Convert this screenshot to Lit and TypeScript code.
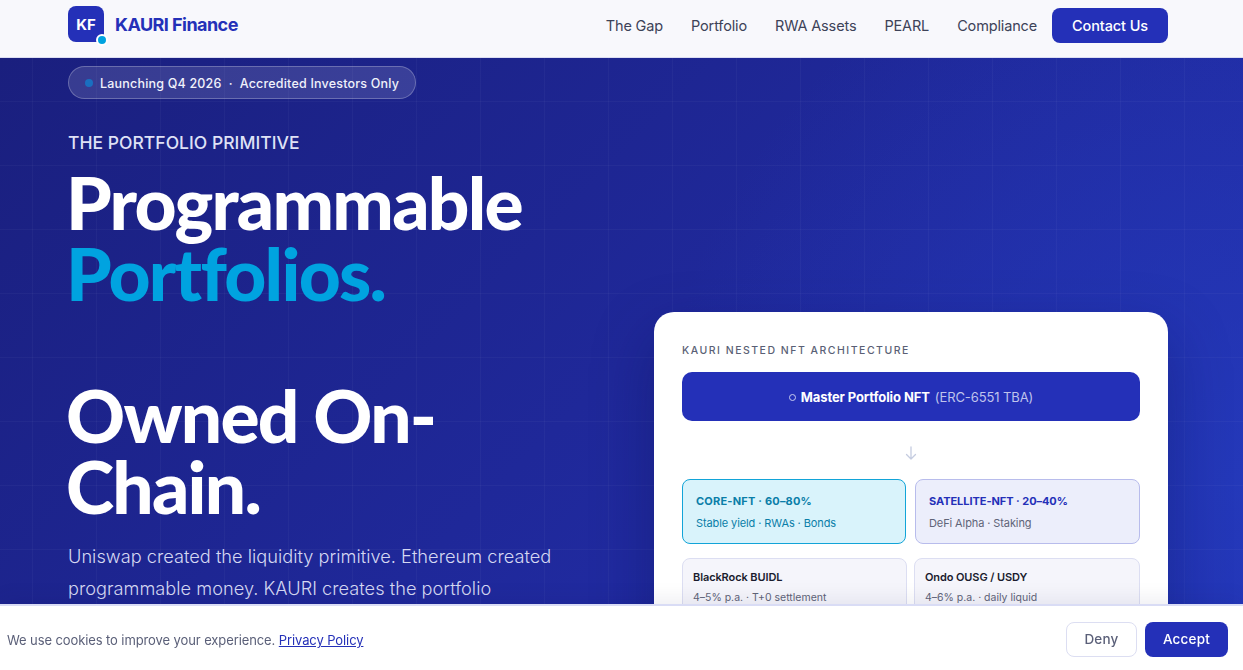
import { LitElement, html, css } from "lit";
import { customElement } from "lit/decorators.js";

const navLinks = ["The Gap", "Portfolio", "RWA Assets", "PEARL", "Compliance"];

@customElement("app-root")
export class AppRoot extends LitElement {
  static styles = css`
    :host {
      display: block;
      height: 100vh;
      overflow: hidden;
      font-family: Inter, "Noto Sans", sans-serif;
    }
    .nav {
      height: 51px;
      display: flex;
      align-items: center;
      justify-content: space-between;
      padding: 0 75px 6px 68px;
      background: #f8f8fc;
      border-bottom: 1px solid #dcdef2;
    }
    .brand {
      display: flex;
      align-items: center;
      gap: 11px;
      margin-top: -3px;
    }
    .logo {
      position: relative;
      width: 36px;
      height: 36px;
      border-radius: 8px;
      background: #2430b8;
      color: #fff;
      font-size: 15px;
      font-weight: 700;
      display: flex;
      align-items: center;
      justify-content: center;
    }
    .logo::after {
      content: "";
      position: absolute;
      right: -4px;
      bottom: -4px;
      width: 8px;
      height: 8px;
      border-radius: 50%;
      background: #00a3e0;
      border: 2px solid #fff;
    }
    .name {
      font-size: 18px;
      font-weight: 700;
      letter-spacing: -0.55px;
      color: #2430b8;
    }
    .links {
      display: flex;
      align-items: center;
      gap: 28px;
    }
    .links a {
      font-size: 14.5px;
      font-weight: 400;
      letter-spacing: -0.15px;
      color: #3d4258;
    }
    .contact {
      margin-left: -13px;
      width: 116px;
      height: 35px;
      border-radius: 8px;
      background: #2430b8;
      color: #fff;
      font-size: 14.5px;
      font-weight: 500;
      letter-spacing: -0.1px;
      display: flex;
      align-items: center;
      justify-content: center;
    }
    .hero {
      height: 612px;
      box-sizing: border-box;
      overflow: hidden;
      padding: 8px 75px 0 68px;
      display: grid;
      grid-template-columns: 514px 514px;
      justify-content: space-between;
      background:
        linear-gradient(rgba(255, 255, 255, 0.03) 1px, transparent 1px) 0 -21px / 64px 64px,
        linear-gradient(90deg, rgba(255, 255, 255, 0.03) 1px, transparent 1px) 32px 0 / 64px 64px,
        radial-gradient(circle at 100% 70%, rgba(36, 60, 190, 0.7), transparent 45%),
        linear-gradient(135deg, #1a1f7e 0%, #2431b4 100%);
    }
    .pill {
      display: inline-flex;
      align-items: center;
      gap: 7px;
      height: 33px;
      box-sizing: border-box;
      padding: 1px 16px 0;
      border-radius: 17px;
      border: 1px solid rgba(255, 255, 255, 0.25);
      background: rgba(255, 255, 255, 0.13);
      color: #f0f1fb;
      font-size: 12.5px;
      font-weight: 500;
      letter-spacing: 0.2px;
      white-space: pre;
    }
    .pill i {
      width: 8px;
      height: 8px;
      border-radius: 50%;
      background: #1a6fc0;
    }
    .eyebrow {
      margin-top: 33px;
      font-size: 17.5px;
      line-height: 22px;
      font-weight: 500;
      letter-spacing: 0.03px;
      color: #dfe1f6;
    }
    h1 {
      margin: 13px 0 0 -2px;
      width: 516px;
      font-family: Lato, Inter, sans-serif;
      font-size: 73px;
      line-height: 71px;
      font-weight: 900;
      letter-spacing: -1.75px;
      color: #fff;
    }
    h1 span {
      color: #00a3e0;
    }
    .lead {
      margin: 18px 0 0;
      width: 490px;
      font-size: 18.2px;
      line-height: 32px;
      font-weight: 300;
      letter-spacing: 0.02px;
      color: #d5d8f2;
    }
    .card {
      align-self: start;
      margin-top: 246px;
      padding: 28px;
      height: 500px;
      box-sizing: border-box;
      border-radius: 20px;
      background: #fff;
      box-shadow: 0 24px 60px rgba(10, 15, 80, 0.35);
    }
    .label {
      padding-top: 1px;
      font-size: 10.5px;
      line-height: 20px;
      font-weight: 500;
      letter-spacing: 1.5px;
      color: #5a5f75;
    }
    .master {
      margin-top: 11px;
      height: 49px;
      border-radius: 10px;
      background: #2430b8;
      color: #fff;
      font-size: 13px;
      font-weight: 700;
      letter-spacing: -0.1px;
      display: flex;
      align-items: center;
      justify-content: center;
      gap: 5px;
    }
    .master em {
      font-style: normal;
      font-weight: 400;
      color: #bfc3ec;
    }
    .ring {
      flex: none;
      width: 5px;
      height: 5px;
      border: 1.5px solid #c9cdf0;
      border-radius: 50%;
      margin-top: 1px;
    }
    .arrow {
      height: 53px;
      padding-top: 5px;
      display: flex;
      align-items: center;
      justify-content: center;
    }
    .row {
      display: grid;
      grid-template-columns: 224px 225px;
      justify-content: space-between;
    }
    .row.assets {
      margin-top: 14px;
      grid-template-columns: 225px 226px;
    }
    .tier {
      height: 65px;
      box-sizing: border-box;
      padding: 13px;
      border-radius: 8px;
    }
    .tier b {
      display: block;
      font-size: 11px;
      line-height: 17px;
      font-weight: 700;
      letter-spacing: 0.2px;
    }
    .tier small {
      display: block;
      margin-top: 5px;
      font-size: 11px;
      line-height: 17px;
      letter-spacing: -0.1px;
    }
    .core {
      background: #d9f3fb;
      border: 1px solid #12a4d8;
      color: #0a7ea8;
    }
    .satellite {
      background: #eceefb;
      border: 1px solid #b8bcec;
    }
    .satellite b {
      color: #2430b8;
      letter-spacing: -0.05px;
    }
    .satellite small {
      color: #5f6478;
    }
    .asset {
      height: 70px;
      box-sizing: border-box;
      padding: 10px;
      border-radius: 8px;
      background: #f5f5fb;
      border: 1px solid #dcdef2;
    }
    .asset b {
      display: block;
      font-size: 11px;
      line-height: 17px;
      font-weight: 600;
      letter-spacing: -0.1px;
      color: #1a1c2e;
    }
    .asset small {
      display: block;
      margin-top: 4px;
      font-size: 10.5px;
      line-height: 16px;
      color: #5f6478;
    }
    .cookie {
      position: fixed;
      left: 0;
      right: 0;
      bottom: 0;
      height: 66px;
      box-sizing: border-box;
      padding: 2px 15px 0 7px;
      display: flex;
      align-items: center;
      justify-content: space-between;
      background: #fff;
      border-top: 2px solid #d9dcf5;
      box-shadow: 0 -4px 20px rgba(10, 15, 80, 0.08);
      color: #5a5f78;
      font-size: 13px;
      letter-spacing: -0.1px;
    }
    .cookie > span {
      padding-top: 2px;
    }
    .cookie a {
      color: #2430b8;
      text-decoration: underline;
    }
    .actions {
      display: flex;
      gap: 8px;
    }
    .actions button {
      height: 35px;
      border-radius: 8px;
      font: 500 13.5px Inter, sans-serif;
      letter-spacing: 0.2px;
    }
    .deny {
      width: 71px;
      border: 1px solid #dcdef2;
      background: #fff;
      color: #5a5f78;
    }
    .accept {
      width: 83px;
      border: none;
      background: #2430b8;
      color: #fff;
    }
  `;

  render() {
    return html`
      <header class="nav">
        <div class="brand">
          <div class="logo">KF</div>
          <span class="name">KAURI Finance</span>
        </div>
        <nav class="links">
          ${navLinks.map((l) => html`<a>${l}</a>`)}
          <div class="contact">Contact Us</div>
        </nav>
      </header>
      <section class="hero">
        <div>
          <div class="pill"><i></i><span>Launching Q4 2026  ·  Accredited Investors Only</span></div>
          <div class="eyebrow">THE PORTFOLIO PRIMITIVE</div>
          <h1>Programmable<br /><span>Portfolios.</span><br /><br />Owned On-Chain.</h1>
          <p class="lead">Uniswap created the liquidity primitive. Ethereum created programmable money. KAURI creates the portfolio primitive.</p>
        </div>
        <div class="card">
          <div class="label">KAURI NESTED NFT ARCHITECTURE</div>
          <div class="master"><span class="ring"></span><span>Master Portfolio NFT</span><em>(ERC-6551 TBA)</em></div>
          <div class="arrow">
            <svg width="14" height="14" viewBox="0 0 14 14" fill="none" stroke="#c5cce0" stroke-width="1.3" stroke-linecap="round" stroke-linejoin="round">
              <path d="M7 1v12M2.5 8.5 7 13l4.500-4.500" />
            </svg>
          </div>
          <div class="row">
            <div class="tier core"><b>CORE-NFT · 60–80%</b><small>Stable yield · RWAs · Bonds</small></div>
            <div class="tier satellite"><b>SATELLITE-NFT · 20–40%</b><small>DeFi Alpha · Staking</small></div>
          </div>
          <div class="row assets">
            <div class="asset"><b>BlackRock BUIDL</b><small>4–5% p.a. · T+0 settlement</small></div>
            <div class="asset"><b>Ondo OUSG / USDY</b><small>4–6% p.a. · daily liquid</small></div>
          </div>
        </div>
      </section>
      <div class="cookie">
        <span>We use cookies to improve your experience. <a>Privacy Policy</a></span>
        <div class="actions">
          <button class="deny">Deny</button>
          <button class="accept">Accept</button>
        </div>
      </div>
    `;
  }
}
